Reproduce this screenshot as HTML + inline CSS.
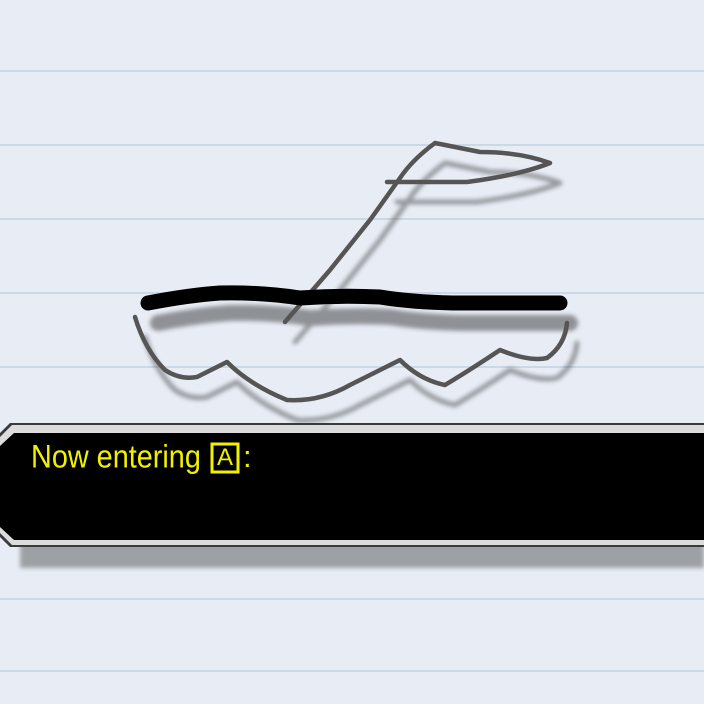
<!DOCTYPE html>
<html><head><style>
html,body{margin:0;padding:0;}
body{width:704px;height:704px;overflow:hidden;background:#e8edf5;position:relative;font-family:"Liberation Sans",sans-serif;}
.l{position:absolute;left:0;width:704px;height:2px;background:#cbd8e6;}
.t{position:absolute;color:#f0f000;font-family:'Liberation Sans',sans-serif;white-space:nowrap;}
</style></head><body>
<div class="l" style="top:70px"></div>
<div class="l" style="top:144px"></div>
<div class="l" style="top:218px"></div>
<div class="l" style="top:292px"></div>
<div class="l" style="top:366px"></div>
<div class="l" style="top:598px"></div>
<div class="l" style="top:670px"></div>
<svg width="704" height="704" style="position:absolute;left:0;top:0">
<defs><filter id="b" x="-10%" y="-10%" width="120%" height="120%"><feGaussianBlur stdDeviation="2"/></filter></defs>
<g transform="translate(10,20)" filter="url(#b)" opacity="0.45" fill="none" stroke-linecap="round" stroke-linejoin="round">
<path d="M387,182 L467,182 Q520,175 550,163 Q520,152 480,152 L435,143 Q412,160 400,178 L370,220 Q350,245 330,270 L285,322" stroke="#333" stroke-width="5"/>
<path d="M148,303 Q190,295 220,293 Q260,292 300,298 Q340,295 380,297 Q410,302 453,303 L560,303" stroke="#222" stroke-width="16"/>
<path d="M135,317 Q145,350 165,370 Q180,380 197,377 L227,362 Q250,385 287,400 Q320,402 350,385 L400,360 Q420,380 445,385 Q470,370 500,350 Q530,362 547,358 Q565,345 567,323" stroke="#333" stroke-width="5"/>
</g>
<g fill="none" stroke-linecap="round" stroke-linejoin="round">
<path d="M387,182 L467,182 Q520,175 550,163 Q520,152 480,152 L435,143 Q412,160 400,178 L370,220 Q350,245 330,270 L285,322" stroke="#555" stroke-width="4.5"/>
<path d="M148,303 Q190,295 220,293 Q260,292 300,298 Q340,295 380,297 Q410,302 453,303 L560,303" stroke="#000" stroke-width="15"/>
<path d="M135,317 Q145,350 165,370 Q180,380 197,377 L227,362 Q250,385 287,400 Q320,402 350,385 L400,360 Q420,380 445,385 Q470,370 500,350 Q530,362 547,358 Q565,345 567,323" stroke="#555" stroke-width="4.5"/>
</g>
<g filter="url(#b)" opacity="0.5"><polygon points="20,445 704,445 704,568 20,568" fill="#555"/></g>
<polygon points="10,423 704,423 704,547 10,547 -2,535 -2,435" fill="#3a3a3a"/>
<polygon points="12,425 704,425 704,545 12,545 0,533 0,437" fill="#dcdcdc"/>
<polygon points="14,433 704,433 704,540 14,540 0,527 0,446" fill="#000"/>
<rect x="212" y="444" width="26" height="28" fill="none" stroke="#f0f000" stroke-width="3"/>
</svg>
<div class="t" style="left:31px;top:438px;font-size:31px;line-height:36px;transform:scale(0.93,1.05);transform-origin:left top;">Now entering</div>
<div class="t" style="left:217px;top:446px;font-size:24px;line-height:24px;">A</div>
<div class="t" style="left:243px;top:439px;font-size:31px;line-height:36px;">:</div>
</body></html>
